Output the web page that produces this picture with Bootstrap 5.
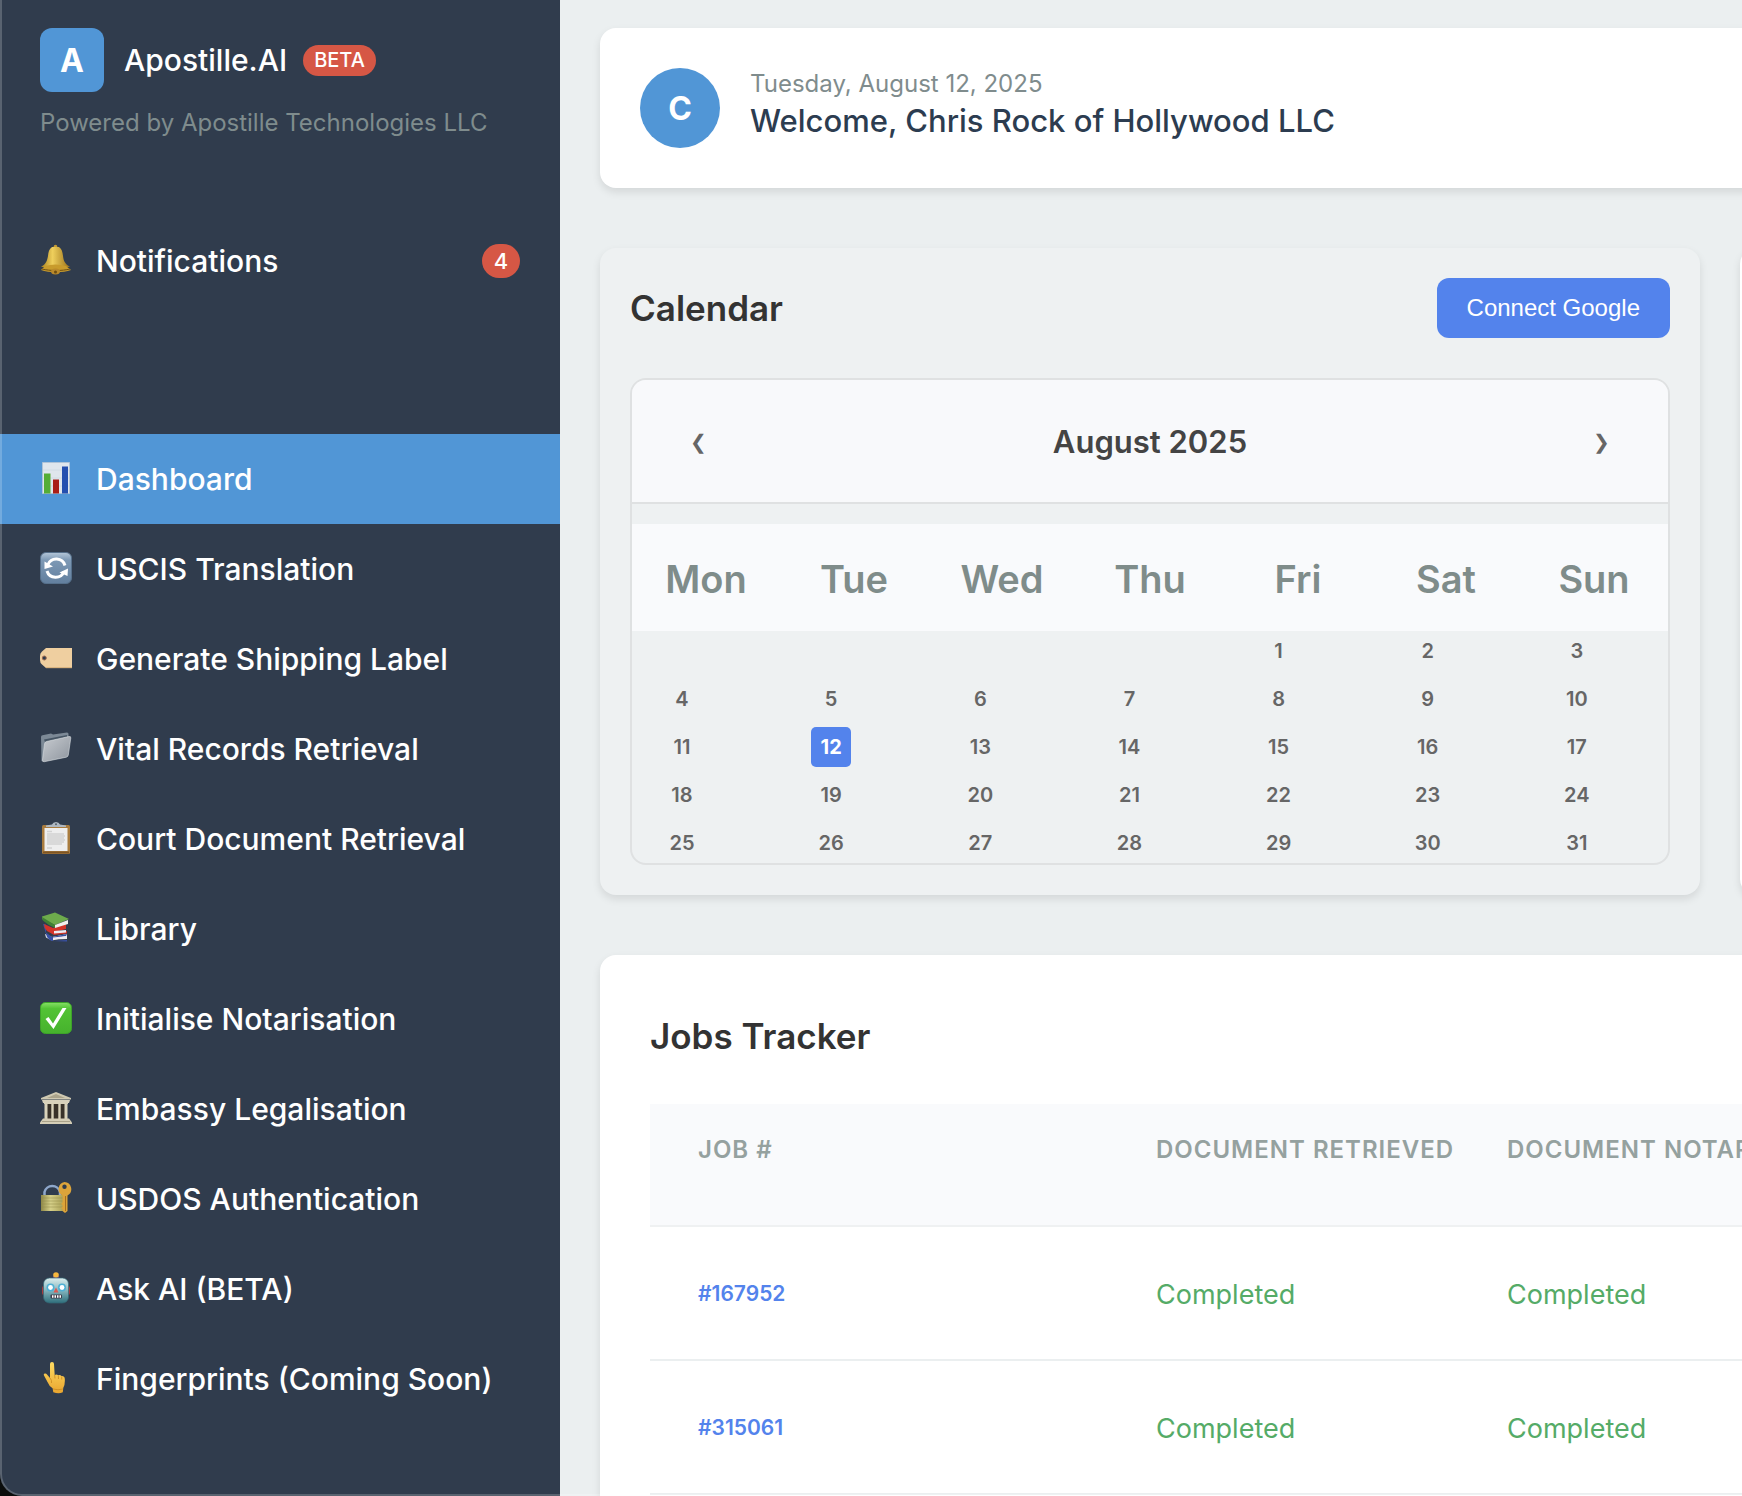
<!DOCTYPE html>
<html lang="en">
<head>
<meta charset="utf-8">
<meta name="viewport" content="width=device-width, initial-scale=1">
<title>Apostille.AI Dashboard</title>
<link href="https://cdn.jsdelivr.net/npm/bootstrap@5.3.0/dist/css/bootstrap.min.css" rel="stylesheet">
<style>
:root{--side:#303c4d;--sky:#5196d6;--blue:#5383ec;--red:#d65745;--muted:#7f8c8d}
body{font-family:Inter,"Liberation Sans",sans-serif;background:#ebeff0;color:#333;height:100vh;overflow:hidden}
.side-bar{width:560px;background:var(--side);color:#fff}
.brand-block{padding:28px 40px 0;height:206px}
.brand-logo{width:64px;height:64px;border-radius:12px;background:var(--sky);font-size:32px;line-height:40px;padding-top:2px;font-weight:700}
.brand-name{font-size:30px;line-height:36px;font-weight:500;margin-left:20px}
.beta-pill{background:var(--red);border-radius:16px;font-size:20px;line-height:31px;font-weight:500;padding:0 11px;margin-left:16px}
.brand-note{font-size:24px;line-height:32px;margin-top:15px;color:var(--muted)}
.side-link{height:90px;padding:0 40px;gap:24px;font-size:30px;line-height:36px;font-weight:500;color:#fff;text-decoration:none}
.side-link:hover{color:#fff}
.side-link svg{width:32px;height:32px;flex:none;margin-bottom:2px}
.side-link.active{background:var(--sky)}
.notice-row{height:110px;margin-bottom:118px}
.count-pill{background:var(--red);border-radius:17px;font-size:22px;line-height:34px;width:38px;font-weight:500}
.main-area{padding:28px 0 0 40px;min-width:0}
.panel{background:#fff;border-radius:16px;box-shadow:0 4px 8px rgba(0,0,0,.1)}
.wide-panel{margin-right:-40px}
.greeting{height:160px;padding:40px;gap:30px}
.avatar-disc{width:80px;height:80px;background:var(--sky);color:#fff;font-size:32px;line-height:40px;padding-top:2px;font-weight:700}
.greet-date{font-size:24px;line-height:32px;color:var(--muted)}
.greet-name{font-size:31px;line-height:42px;font-weight:500;color:#2c3c50;margin:0}
.panel-row{gap:40px;margin:60px 0}
.cal-panel{background:#eef1f2;padding:30px;flex:0 0 1100px}
.next-panel{flex:1 0 400px}
.panel-title{font-size:35px;line-height:42px;font-weight:600;margin:0;color:#333}
.connect-btn{background:var(--blue);color:#fff;border:0;border-radius:12px;height:60px;padding:0 30px;font:24px/28px "Liberation Sans",Arial,sans-serif}
.cal-box{border:2px solid #dfe1e2;border-radius:16px;margin-top:40px}
.cal-head{height:124px;background:#f8f9fb;border-bottom:2px solid #dfe1e2;padding:2px 50px 0;color:#444}
.cal-head h3{font-size:31px;line-height:40px;font-weight:600;margin:0}
.step-btn{border:0;background:none;color:#666;font-size:20px;line-height:40px;width:32px;padding:0}
.week-names{display:grid;grid-template-columns:repeat(7,1fr);margin-top:20px;height:107px;padding-top:3px;align-items:center;text-align:center;background:#f9fafc;color:#7f8c8a;font-size:38px;font-weight:600}
.day-grid{display:grid;grid-template-columns:repeat(7,1fr);gap:8px;color:#666;font-size:20px;font-weight:600}
.day-grid span{width:40px;margin-left:30px;line-height:40px;text-align:center}
.day-grid .first-day{grid-column:5}
.day-grid .today{background:var(--blue);color:#fff;border-radius:5px;font-weight:700}
.jobs-panel{padding:60px 50px}
.jobs-table{table-layout:fixed;width:1600px;margin-top:47px;text-align:left;white-space:nowrap}
.jobs-table th{height:122px;background:#f9fafc;border-bottom:2px solid #eff1f2;padding:30px 0 0;vertical-align:top;font-size:24px;line-height:32px;font-weight:600;letter-spacing:1px;color:#95a19f}
.jobs-table td{height:134px;border-bottom:2px solid #ebeff0;font-size:27px;line-height:36px;color:#55ab67;padding:4px 0 0}
.jobs-table td:first-child{padding-top:0}
.jobs-table th:first-child,.jobs-table td:first-child{padding-left:48px}
.jobs-table a{font-size:21px;font-weight:600;color:var(--blue);text-decoration:none}
.col-job{width:506px}.col-step{width:351px}
.window-edge{position:fixed;inset:0 -4px 0 0;border:solid rgba(255,255,255,.2);border-width:0 0 2px 2px;border-bottom-left-radius:22px;box-shadow:0 0 0 24px #0b0d0c;pointer-events:none}
</style>
<script src="https://cdn.jsdelivr.net/npm/bootstrap@5.3.0/dist/js/bootstrap.bundle.min.js"></script>
</head>
<body>
<div class="d-flex vh-100 overflow-hidden">
<aside class="side-bar flex-shrink-0">
  <div class="brand-block">
    <div class="d-flex align-items-center">
      <div class="brand-logo d-flex align-items-center justify-content-center">A</div>
      <div class="brand-name">Apostille.AI</div>
      <span class="beta-pill">BETA</span>
    </div>
    <div class="brand-note text-nowrap">Powered by Apostille Technologies LLC</div>
  </div>
  <a href="#" class="side-link notice-row d-flex align-items-center">
    <svg viewBox="0 0 32 32"><defs><linearGradient id="gb"><stop offset="0" stop-color="#a9811f"/><stop offset=".4" stop-color="#efcf5c"/><stop offset="1" stop-color="#9a7018"/></linearGradient></defs><circle cx="15.500" cy="2.500" r="1.800" fill="#c39a35"/><path d="M12 3h7c3 2 3.500 5 4 9 .6 5 2 8 7 11H1c5-3 6-6 7-11 .4-4 1-7 4-9z" fill="url(#gb)"/><path d="M5 22c7-2 14-2 21 0l5 4c-8 3-22 3-30 0z" fill="#c89b2c"/><path d="M2 25c8 2 20 2 28 0" stroke="#705012" fill="none"/><ellipse cx="15.500" cy="27.500" rx="4.500" ry="3" fill="#b9892a"/><circle cx="15.500" cy="28" r="1.500" fill="#6d4d12"/></svg>
    <span>Notifications</span><span class="count-pill ms-auto text-center">4</span>
  </a>
  <nav>
    <a href="#" class="side-link active d-flex align-items-center">
      <svg viewBox="0 0 32 32"><path d="M2.500.5h27v31h-27z" fill="#dfe6ed" stroke="#aec3d8"/><path d="M3 8h26M3 16h26M3 24h26" stroke="#cbd6e0" stroke-width=".6"/><path d="M4 11.500h6.500V31.500H4z" fill="#55ad36"/><path d="M13 17.500h6v14h-6z" fill="#a91e17"/><path d="M22 4.500h6v27h-6z" fill="#244faf"/></svg><span>Dashboard</span></a>
    <a href="#" class="side-link d-flex align-items-center">
      <svg viewBox="0 0 32 32"><defs><linearGradient id="gs" x2="0" y2="1"><stop offset="0" stop-color="#b5c7d9"/><stop offset=".25" stop-color="#7d99b5"/><stop offset="1" stop-color="#627f9e"/></linearGradient></defs><rect x=".5" y=".5" width="31" height="31" rx="5.500" fill="url(#gs)" stroke="#56708b"/><path d="M8 12.500a9 9 0 0 1 17 1M24 19.500a9 9 0 0 1-17-.5" fill="none" stroke="#fff" stroke-width="3"/><path d="M4.500 9.500v7.500l8.500-2.500zM28 16.500l-8.500 4 8 3.500z" fill="#fff"/></svg><span>USCIS Translation</span></a>
    <a href="#" class="side-link d-flex align-items-center">
      <svg viewBox="0 0 32 32"><path d="M6 6h26v20H6l-4-3.500Q0 21 0 18v-4q0-3 2-4.500z" fill="#efcfa0"/><path d="M6 25.700h26" stroke="#d5ae78"/><circle cx="4.300" cy="16" r="2" fill="#303c4d" stroke="#9b6b52"/></svg><span>Generate Shipping Label</span></a>
    <a href="#" class="side-link d-flex align-items-center">
      <svg viewBox="0 0 32 32"><defs><linearGradient id="gf" x2="1" y2="1"><stop offset="0" stop-color="#c7cbd0"/><stop offset="1" stop-color="#8e959e"/></linearGradient></defs><path d="M1 5q0-1.500 1.500-1.700L11 1.500l2 1L27 .5q1.500 0 1.500 1.500v5L3 29.500 1.500 29z" fill="#7c8996"/><path d="M4 7.500 27 3v2L5 10z" fill="#465564"/><path d="M6.500 9.500 29 4.500q2-.5 1.800 1.500l-2.500 17q-.2 1.700-2 2.200l-22 4.500q-2 .3-1.800-1.700l2-16q.3-2.100 2-2.500z" fill="url(#gf)" stroke="#d9dde0" stroke-width=".6"/></svg><span>Vital Records Retrieval</span></a>
    <a href="#" class="side-link d-flex align-items-center">
      <svg viewBox="0 0 32 32"><rect x="2" y="3" width="28" height="29" rx="1.500" fill="#a97c3e"/><path d="M3 29.500h26v2H3z" fill="#7d5524"/><path d="M4.500 6h23v23h-23z" fill="#eee"/><path d="M7 9.500h5M7 12h17M7 14h18M7 16h17M7 18h18M7 20h17M7 22h15M7 26h5" stroke="#d2d2d2" stroke-width="1.300"/><path d="M6 5V3.500L12 2.500q1-2.500 4-2.500t4 2.500l6 1V5z" fill="#aeb8c2"/><circle cx="16" cy="2.300" r="1" fill="#55616d"/></svg><span>Court Document Retrieval</span></a>
    <a href="#" class="side-link d-flex align-items-center">
      <svg viewBox="0 0 32 32"><path d="m5 22 7 3 15-3v3l-15 3.500-6-3z" fill="#e9e9ec"/><path d="m3 12 3 .5v8l6 4.500 15-3-1 2-13 3v2l14-1v1.500L12 29q-3-1-5-4z" fill="#3850a4"/><path d="m4 12 9 4 13-4v5l-12 3 13-1v2.500L14 23l-7-4q-3-3-3-7z" fill="#d33429"/><path d="m14 19 12-1v2.500l-12 1zm-1 6.500 14-1.500v3L13 27.500z" fill="#eceaf0"/><path d="M2 4.500 15 .5 29 7l-14 6L2 7z" fill="#6dab4c"/><path d="m2 5 13 8v3Q8 13 3.500 9 2 8 2 5z" fill="#3f8133"/><path d="m15 13 13-5v4l-13 4z" fill="#f0f0ed"/></svg><span>Library</span></a>
    <a href="#" class="side-link d-flex align-items-center">
      <svg viewBox="0 0 32 32"><defs><linearGradient id="gg" x2="0" y2="1"><stop offset="0" stop-color="#86e066"/><stop offset=".2" stop-color="#52c334"/><stop offset="1" stop-color="#46b22d"/></linearGradient></defs><rect x=".5" y=".5" width="31" height="31" rx="5" fill="url(#gg)" stroke="#3da329"/><path d="m5.500 17 3-2 4.500 6.500L22.500 6h4L13.500 27z" fill="#fff"/></svg><span>Initialise Notarisation</span></a>
    <a href="#" class="side-link d-flex align-items-center">
      <svg viewBox="0 0 32 32"><path d="M6 9h20v18H6z" fill="#39332a"/><path d="M16 0 31 6v1.500H1V6z" fill="#cfc9b2"/><path d="M16 2 25 6H7z" fill="#aaa38b"/><path d="M2 8h28l-1 3H3z" fill="#d8d2bc"/><path d="M4.500 11.500H7.500V27h-3zM11.300 11.500h2.400V27h-2.400zM18.300 11.500h2.400V27h-2.400zM24.500 11.500h3V27h-3zM4 10.500h24v1.500H4z" fill="#d9d3bb"/><path d="M3 26.500h26l3 4v1.500H0v-1.500z" fill="#d5ceb6"/><path d="M2 29.500h28" stroke="#aaa289"/></svg><span>Embassy Legalisation</span></a>
    <a href="#" class="side-link d-flex align-items-center">
      <svg viewBox="0 0 32 32"><defs><linearGradient id="gl"><stop offset="0" stop-color="#8f8847"/><stop offset=".4" stop-color="#d6d089"/><stop offset="1" stop-color="#a69c50"/></linearGradient></defs><path d="M4.500 14V10a8 8 0 0 1 15.500 0v4" fill="none" stroke="#8ea7cb" stroke-width="2.500"/><path d="M1 13h24v16H1z" fill="url(#gl)"/><path d="M1 16h24M1 19h24M1 22h24M1 25h24" stroke="#918849" stroke-width=".5"/><path fill-rule="evenodd" d="M24.500 0a7.200 7.200 0 0 1 3 13.500V29l-2.500 2-2.500-2v-2l-1.500-1 1.500-1v-2l-1.500-1 1.500-1.500v-7A7.200 7.200 0 0 1 24.500 0zm0 2.500a2.200 2.200 0 1 0 0 4.400 2.200 2.200 0 0 0 0-4.400z" fill="#dca43a"/><path d="M25.500 14v15" stroke="#a66e1e"/></svg><span>USDOS Authentication</span></a>
    <a href="#" class="side-link d-flex align-items-center">
      <svg viewBox="0 0 32 32"><defs><linearGradient id="gr" x2="0" y2="1"><stop offset="0" stop-color="#dceeee"/><stop offset=".5" stop-color="#84b5bd"/><stop offset="1" stop-color="#2f6f7c"/></linearGradient></defs><rect x="2" y="14" width="28" height="9" rx="2" fill="#a73c3f"/><path d="M13 4h6v3h-6z" fill="#71457f"/><circle cx="16" cy="3" r="2.800" fill="#f6b73e"/><rect x="3.500" y="6" width="25" height="25" rx="6" fill="url(#gr)" stroke="#346975" stroke-width=".7"/><circle cx="10.500" cy="15.500" r="4" fill="#4fb0d4"/><circle cx="22" cy="15.500" r="4" fill="#4fb0d4"/><circle cx="10.500" cy="15.500" r="2.400" fill="#fff"/><circle cx="22" cy="15.500" r="2.400" fill="#fff"/><path d="m16 15.500 2.500 5h-5z" fill="#db5952"/><rect x="10.500" y="22.500" width="11.500" height="4" rx="1" fill="#403e4c"/><path d="M12 24.500h9" stroke="#fff" stroke-width="2.500" stroke-dasharray="1.500 1"/></svg><span>Ask AI (BETA)</span></a>
    <a href="#" class="side-link d-flex align-items-center">
      <svg viewBox="0 0 32 32"><defs><linearGradient id="gh" x2="0" y2="1"><stop offset="0" stop-color="#ffdc62"/><stop offset="1" stop-color="#e9a52f"/></linearGradient></defs><path transform="translate(2 0)" d="M8 2q0-2 2-2t2 2l.7 11q2-1 3.500.3 2-.8 3.300.8 3-.3 3.300 2.700.4 6-1.500 9l-.5 4.500q-4 2-9.500 0l-.7-4Q7 24 5.500 20L2 13.500q-.7-1.500.7-2t2.300 1l3 3.500z" fill="url(#gh)"/><path d="m14.700 13 .3 3.500m3.300-3 .2 3.500m3.200-2.500v3M10 16q2 2 1.500 5M13 27q5 1.500 10 0" fill="none" stroke="#c98921" stroke-width=".8"/></svg><span class="text-nowrap">Fingerprints (Coming Soon)</span></a>
  </nav>
</aside>
<main class="main-area flex-grow-1">
  <header class="panel wide-panel greeting d-flex">
    <div class="avatar-disc rounded-circle d-flex align-items-center justify-content-center">C</div>
    <div><div class="greet-date">Tuesday, August 12, 2025</div><h1 class="greet-name">Welcome, Chris Rock of Hollywood LLC</h1></div>
  </header>
  <div class="panel-row d-flex">
    <section class="panel cal-panel">
      <div class="d-flex justify-content-between align-items-center"><h2 class="panel-title">Calendar</h2><button type="button" class="connect-btn">Connect Google</button></div>
      <div class="cal-box overflow-hidden">
        <div class="cal-head d-flex justify-content-between align-items-center">
          <button type="button" class="step-btn" aria-label="Previous month">❮</button><h3>August 2025</h3><button type="button" class="step-btn" aria-label="Next month">❯</button>
        </div>
        <div class="week-names"><span>Mon</span><span>Tue</span><span>Wed</span><span>Thu</span><span>Fri</span><span>Sat</span><span>Sun</span></div>
        <div class="day-grid">
          <span class="first-day">1</span><span>2</span><span>3</span>
          <span>4</span><span>5</span><span>6</span><span>7</span><span>8</span><span>9</span><span>10</span>
          <span>11</span><span class="today">12</span><span>13</span><span>14</span><span>15</span><span>16</span><span>17</span>
          <span>18</span><span>19</span><span>20</span><span>21</span><span>22</span><span>23</span><span>24</span>
          <span>25</span><span>26</span><span>27</span><span>28</span><span>29</span><span>30</span><span>31</span>
        </div>
      </div>
    </section>
    <section class="panel next-panel"></section>
  </div>
  <section class="panel wide-panel jobs-panel">
    <h2 class="panel-title">Jobs Tracker</h2>
    <table class="jobs-table">
      <colgroup><col class="col-job"><col class="col-step"><col></colgroup>
      <thead><tr><th>JOB #</th><th>DOCUMENT RETRIEVED</th><th>DOCUMENT NOTARISED</th></tr></thead>
      <tbody>
        <tr><td><a href="#">#167952</a></td><td>Completed</td><td>Completed</td></tr>
        <tr><td><a href="#">#315061</a></td><td>Completed</td><td>Completed</td></tr>
      </tbody>
    </table>
  </section>
</main>
</div>
<div class="window-edge"></div>
</body>
</html>
